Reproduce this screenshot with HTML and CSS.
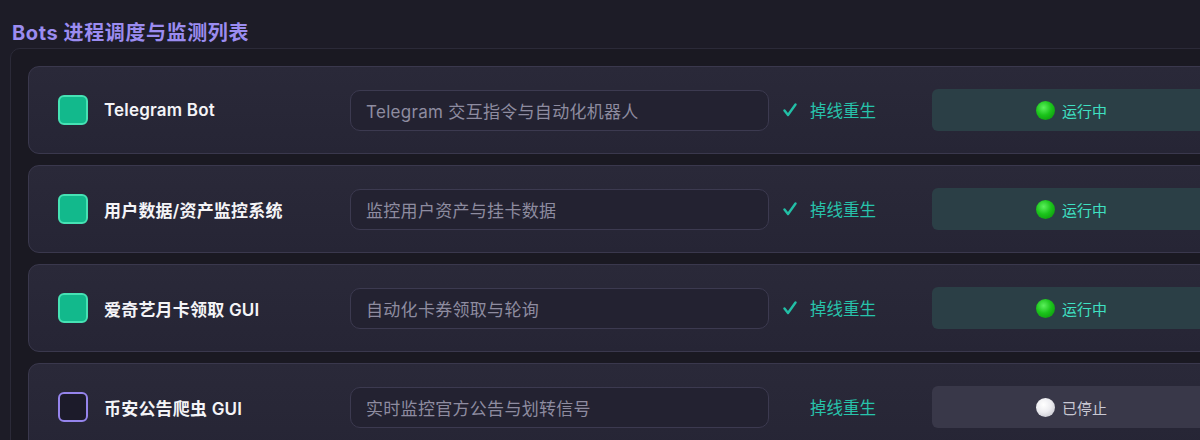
FILE: index.html
```html
<!DOCTYPE html>
<html lang="zh-CN">
  <head>
    <meta charset="UTF-8" />
    <meta name="viewport" content="width=device-width, initial-scale=1.0" />
    <title>Bots 进程调度与监测列表</title>
    <link rel="stylesheet" href="styles.css">
  </head>
  <body>
    <main>
      <h2 class="title">Bots 进程调度与监测列表</h2>

      <section class="panel">
        <div class="bot">
          <span class="box on"></span>
          <span class="name">Telegram Bot</span>
          <div class="desc">Telegram 交互指令与自动化机器人</div>
          <div class="restart">
            <svg class="tick" width="14" height="14" viewBox="0 0 14 14"><path d="M1.5 7.5 L5 12 L12.5 1.5" /></svg>
            <span>掉线重生</span>
          </div>
          <div class="status run"><i class="dot"></i>运行中</div>
        </div>

        <div class="bot">
          <span class="box on"></span>
          <span class="name">用户数据/资产监控系统</span>
          <div class="desc">监控用户资产与挂卡数据</div>
          <div class="restart">
            <svg class="tick" width="14" height="14" viewBox="0 0 14 14"><path d="M1.5 7.5 L5 12 L12.5 1.5" /></svg>
            <span>掉线重生</span>
          </div>
          <div class="status run"><i class="dot"></i>运行中</div>
        </div>

        <div class="bot">
          <span class="box on"></span>
          <span class="name">爱奇艺月卡领取 GUI</span>
          <div class="desc">自动化卡券领取与轮询</div>
          <div class="restart">
            <svg class="tick" width="14" height="14" viewBox="0 0 14 14"><path d="M1.5 7.5 L5 12 L12.5 1.5" /></svg>
            <span>掉线重生</span>
          </div>
          <div class="status run"><i class="dot"></i>运行中</div>
        </div>

        <div class="bot">
          <span class="box"></span>
          <span class="name">币安公告爬虫 GUI</span>
          <div class="desc">实时监控官方公告与划转信号</div>
          <div class="restart">
            <svg class="tick hidden" width="14" height="14" viewBox="0 0 14 14"><path d="M1.5 7.5 L5 12 L12.5 1.5" /></svg>
            <span>掉线重生</span>
          </div>
          <div class="status stop"><i class="dot"></i>已停止</div>
        </div>
      </section>
    </main>
  </body>
</html>
```

FILE: styles.css
```css
* {
  padding: 0;
  margin: 0;
  box-sizing: border-box;
}
html {
  font-family: Inter, "Noto Sans CJK SC", sans-serif;
}
body {
  background-color: #1d1c27;
  color: #f2f2f5;
  overflow: hidden;
  width: 1200px;
  height: 440px;
}
main {
  width: 1300px;
  padding: 21px 0 0 10px;
}
.title {
  font-size: 20px;
  line-height: 24px;
  font-weight: 700;
  letter-spacing: 0.6px;
  color: #9b8cf0;
  padding-left: 2px;
  margin-bottom: 3px;
}
.panel {
  background-color: #1a1922;
  border: 1px solid #2b2a38;
  border-radius: 10px;
  padding: 17px;
  display: flex;
  flex-direction: column;
  gap: 11px;
}
.bot {
  display: grid;
  grid-template-columns: 46px 246px 433px 149px 300px;
  align-items: center;
  height: 88px;
  padding: 0 29px;
  background: linear-gradient(180deg, #2a2939 0%, #262535 100%);
  border: 1px solid #3a384d;
  border-radius: 11px;
  width: 1234px;
}
.box {
  width: 30px;
  height: 30px;
  border-radius: 6px;
  border: 2px solid #9584ec;
  background-color: #1c1b2a;
}
.box.on {
  border-color: #46e2b4;
  background-color: #12b98c;
}
.name {
  font-size: 17px;
  font-weight: 600;
  letter-spacing: 0.2px;
  color: #f4f4f7;
}
.desc {
  width: 419px;
  height: 41px;
  border: 1px solid #3c3a50;
  border-radius: 10px;
  background-color: #232231;
  padding: 0 15px;
  display: flex;
  align-items: center;
  font-size: 17px;
  letter-spacing: 0.3px;
  color: #8e8ca0;
}
.restart {
  display: flex;
  align-items: center;
  gap: 13px;
  font-size: 16.5px;
  color: #27c3ab;
}
.tick path {
  fill: none;
  stroke: #22bfa6;
  stroke-width: 2.4;
  stroke-linecap: round;
  stroke-linejoin: round;
}
.tick.hidden {
  visibility: hidden;
}
.status {
  height: 42px;
  border-radius: 6px;
  display: flex;
  align-items: center;
  padding-left: 104px;
  gap: 7px;
  font-size: 15px;
}
.status.run {
  background-color: #2b3f46;
  color: #3fe0c2;
}
.status.stop {
  background-color: #393849;
  color: #c9c8d3;
}
.dot {
  width: 19px;
  height: 19px;
  border-radius: 50%;
}
.run .dot {
  background: radial-gradient(circle at 40% 35%, #5cf05c 0%, #1bc41b 45%, #088a08 100%);
}
.stop .dot {
  background: radial-gradient(circle at 40% 35%, #ffffff 0%, #ececf0 45%, #b8b8c2 100%);
}
```
